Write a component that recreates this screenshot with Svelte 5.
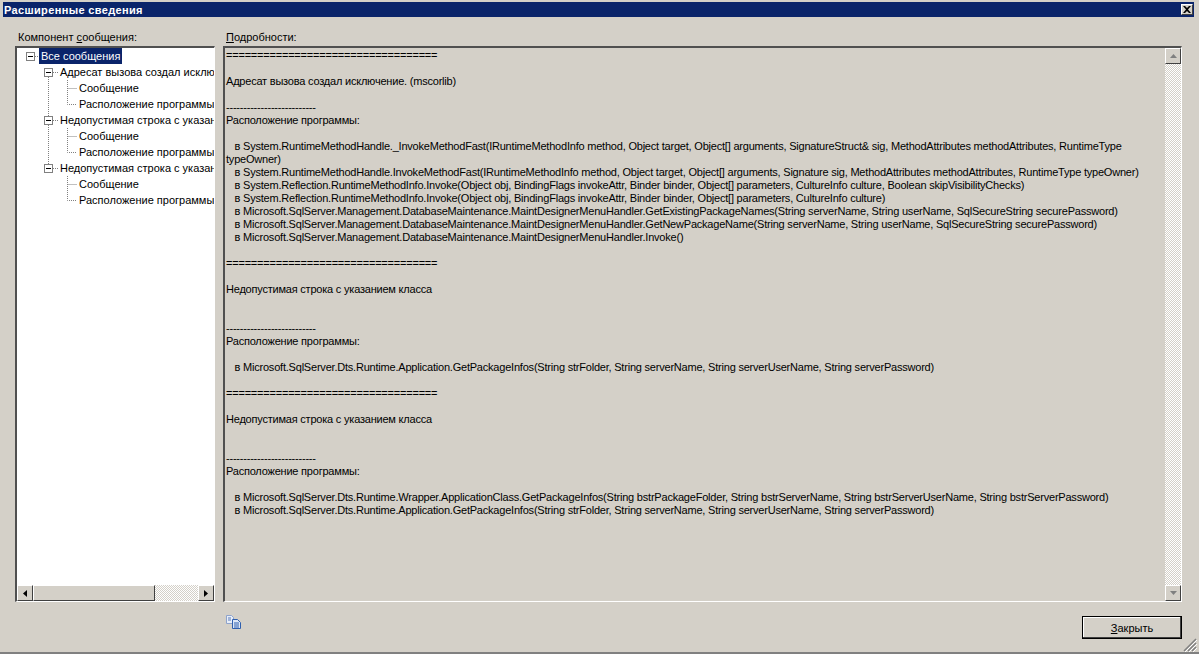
<script>
    const treeRows = [
        { level: 0, text: "Все сообщения", selected: true, box: true },
        { level: 1, text: "Адресат вызова создал исключение. (mscorlib)", box: true },
        { level: 2, text: "Сообщение" },
        { level: 2, text: "Расположение программы" },
        { level: 1, text: "Недопустимая строка с указанием класса", box: true },
        { level: 2, text: "Сообщение" },
        { level: 2, text: "Расположение программы" },
        { level: 1, text: "Недопустимая строка с указанием класса", box: true },
        { level: 2, text: "Сообщение" },
        { level: 2, text: "Расположение программы" },
    ];

    const eq = "==================================";
    const dash = "--------------------------";

    const details = [
        eq,
        "",
        "Адресат вызова создал исключение. (mscorlib)",
        "",
        dash,
        "Расположение программы:",
        "",
        "   в System.RuntimeMethodHandle._InvokeMethodFast(IRuntimeMethodInfo method, Object target, Object[] arguments, SignatureStruct& sig, MethodAttributes methodAttributes, RuntimeType",
        "typeOwner)",
        "   в System.RuntimeMethodHandle.InvokeMethodFast(IRuntimeMethodInfo method, Object target, Object[] arguments, Signature sig, MethodAttributes methodAttributes, RuntimeType typeOwner)",
        "   в System.Reflection.RuntimeMethodInfo.Invoke(Object obj, BindingFlags invokeAttr, Binder binder, Object[] parameters, CultureInfo culture, Boolean skipVisibilityChecks)",
        "   в System.Reflection.RuntimeMethodInfo.Invoke(Object obj, BindingFlags invokeAttr, Binder binder, Object[] parameters, CultureInfo culture)",
        "   в Microsoft.SqlServer.Management.DatabaseMaintenance.MaintDesignerMenuHandler.GetExistingPackageNames(String serverName, String userName, SqlSecureString securePassword)",
        "   в Microsoft.SqlServer.Management.DatabaseMaintenance.MaintDesignerMenuHandler.GetNewPackageName(String serverName, String userName, SqlSecureString securePassword)",
        "   в Microsoft.SqlServer.Management.DatabaseMaintenance.MaintDesignerMenuHandler.Invoke()",
        "",
        eq,
        "",
        "Недопустимая строка с указанием класса",
        "",
        "",
        dash,
        "Расположение программы:",
        "",
        "   в Microsoft.SqlServer.Dts.Runtime.Application.GetPackageInfos(String strFolder, String serverName, String serverUserName, String serverPassword)",
        "",
        eq,
        "",
        "Недопустимая строка с указанием класса",
        "",
        "",
        dash,
        "Расположение программы:",
        "",
        "   в Microsoft.SqlServer.Dts.Runtime.Wrapper.ApplicationClass.GetPackageInfos(String bstrPackageFolder, String bstrServerName, String bstrServerUserName, String bstrServerPassword)",
        "   в Microsoft.SqlServer.Dts.Runtime.Application.GetPackageInfos(String strFolder, String serverName, String serverUserName, String serverPassword)",
    ].join("\n");
</script>

<div class="window">
    <div class="titlebar">
        <span class="title">Расширенные сведения</span>
        <button class="close" aria-label="Закрыть окно">
            <svg width="8" height="7" viewBox="0 0 8 7">
                <path d="M0 0h2l2 2 2-2h2L5 3.500 8 7H6L4 5 2 7H0l3-3.500z" fill="#000" />
            </svg>
        </button>
    </div>

    <div class="panes">
        <div class="left">
            <div class="label">Компонент <u>с</u>ообщения:</div>
            <div class="sunken tree-box">
                <div class="tree">
                    <svg class="tree-lines" width="196" height="160">
                        <g stroke="#808080" stroke-dasharray="1 1" fill="none">
                            <path d="M31.500 29V125" />
                            <path d="M50.500 32V56.500H60M50.500 40.500H60" />
                            <path d="M50.500 80V104.500H60M50.500 88.500H60" />
                            <path d="M50.500 128V152.500H60M50.500 136.500H60" />
                        </g>
                    </svg>
                    {#each treeRows as row}
                        <div class="row level{row.level}">
                            {#if row.box}
                                <span class="box"><i></i></span>
                                <span class="dots"></span>
                            {/if}
                            <span class="node" class:selected={row.selected}>{row.text}</span>
                        </div>
                    {/each}
                </div>
                <div class="hscroll">
                    <div class="sb-btn">
                        <svg width="4" height="7" viewBox="0 0 4 7"><path d="M4 0v7L0 3.500z" fill="#000" /></svg>
                    </div>
                    <div class="thumb"></div>
                    <div class="track"></div>
                    <div class="sb-btn">
                        <svg width="4" height="7" viewBox="0 0 4 7"><path d="M0 0v7l4-3.500z" fill="#000" /></svg>
                    </div>
                </div>
            </div>
        </div>

        <div class="right">
            <div class="label"><u>П</u>одробности:</div>
            <div class="sunken detail-box">
                <div class="details">{details}</div>
                <div class="vscroll">
                    <div class="sb-btn">
                        <svg width="7" height="4" viewBox="0 0 7 4"><path d="M0 4h7L3.500 0z" fill="#808080" /></svg>
                    </div>
                    <div class="track"></div>
                    <div class="sb-btn">
                        <svg width="7" height="4" viewBox="0 0 7 4"><path d="M0 0h7L3.500 4z" fill="#808080" /></svg>
                    </div>
                </div>
            </div>
        </div>
    </div>

    <div class="footer">
        <svg class="copy" width="16" height="14" viewBox="0 0 16 14">
            <path d="M.5.500h5l2 2v6h-7z" fill="#e8eef8" stroke="#8ea3cc" />
            <path d="M2 3h3M2 5h3" stroke="#5a7ab8" />
            <path d="M6.500 4.500h5l3 3v6h-8z" fill="#dbe6f8" stroke="#2f5fae" />
            <path d="M8 8h5M8 10h5M8 12h5" stroke="#2f5fae" />
        </svg>
        <button class="close-btn"><u>З</u>акрыть</button>
        <svg class="grip" width="14" height="14" viewBox="0 0 14 14">
            <path d="M13 1 1 13M13 5 5 13M13 9 9 13" stroke="#808080" stroke-width="1.500" fill="none" />
            <path d="M14 2 2 14M14 6 6 14M14 10 10 14" stroke="#fff" fill="none" />
        </svg>
    </div>
</div>

<style>
    :global(body) {
        margin: 0;
        background: #d4d0c8;
    }

    .window {
        width: 1199px;
        height: 654px;
        box-sizing: border-box;
        padding: 2px 5px 0 3px;
        background: #d4d0c8;
        border-bottom: 2px solid #808080;
        overflow: hidden;
        display: flex;
        flex-direction: column;
        font-family: "Liberation Sans", Arial, sans-serif;
        font-size: 11px;
        color: #000;
    }

    .titlebar {
        height: 15px;
        flex: none;
        background: #0a246a;
        display: flex;
        align-items: center;
        justify-content: space-between;
        padding: 0 1px 0 1px;
    }

    .title {
        color: #fff;
        font-weight: bold;
        font-size: 11px;
        letter-spacing: 0.35px;
    }

    .close {
        width: 12px;
        height: 11px;
        padding: 0;
        background: #d4d0c8;
        border: 1px solid;
        border-color: #fff #404040 #404040 #fff;
        display: flex;
        align-items: center;
        justify-content: center;
    }

    .panes {
        display: flex;
        gap: 8px;
        padding: 14px 0 0 12px;
        height: 585px;
        box-sizing: border-box;
        flex: none;
    }

    .label {
        height: 15px;
        line-height: 13px;
        padding-left: 3px;
        flex: none;
    }

    .left {
        width: 200px;
        display: flex;
        flex-direction: column;
    }

    .right {
        width: 959px;
        display: flex;
        flex-direction: column;
    }

    .sunken {
        flex: 1;
        min-height: 0;
        box-sizing: border-box;
        border-style: solid;
        border-width: 2px 1px 1px 2px;
        border-color: #505050 #fff #fff #505050;
        display: flex;
    }

    .tree-box {
        flex-direction: column;
        background: #fff;
    }

    .tree {
        flex: 1;
        position: relative;
        overflow: hidden;
    }

    .tree-lines {
        position: absolute;
        left: 0;
        top: 0;
    }

    .row {
        height: 16px;
        display: flex;
        align-items: center;
        white-space: nowrap;
        position: relative;
    }

    .level0 {
        padding-left: 9px;
    }

    .level1 {
        padding-left: 27px;
    }

    .level2 {
        padding-left: 60px;
    }

    .box {
        width: 9px;
        height: 9px;
        flex: none;
        box-sizing: border-box;
        border: 1px solid #808080;
        background: #fff;
        display: flex;
        align-items: center;
        justify-content: center;
    }

    .box i {
        width: 5px;
        height: 1px;
        background: #000;
    }

    .dots {
        width: 5px;
        height: 1px;
        flex: none;
        background: repeating-linear-gradient(90deg, #808080 0 1px, transparent 1px 2px);
    }

    .level0 .dots {
        width: 4px;
    }

    .node {
        padding: 0 2px;
        line-height: 16px;
        min-width: 0;
        overflow: hidden;
    }

    .selected {
        background: #0a246a;
        color: #fff;
    }

    .hscroll {
        height: 16px;
        flex: none;
        display: flex;
    }

    .vscroll {
        width: 16px;
        flex: none;
        display: flex;
        flex-direction: column;
    }

    .sb-btn {
        width: 16px;
        height: 16px;
        flex: none;
        box-sizing: border-box;
        background: #d4d0c8;
        border: 1px solid;
        border-color: #fff #404040 #404040 #fff;
        display: flex;
        align-items: center;
        justify-content: center;
    }

    .thumb {
        width: 122px;
        flex: none;
        box-sizing: border-box;
        background: #d4d0c8;
        border: 1px solid;
        border-color: #fff #404040 #404040 #fff;
    }

    .track {
        flex: 1;
        background: repeating-conic-gradient(#fff 0 25%, #d4d0c8 0 50%) 0 0 / 2px 2px;
    }

    .detail-box {
        background: #d4d0c8;
    }

    .details {
        flex: 1;
        padding: 1px 0 0 1px;
        white-space: pre;
        line-height: 13px;
        letter-spacing: -0.21px;
        overflow: hidden;
    }

    .footer {
        flex: 1;
        position: relative;
        display: flex;
        justify-content: space-between;
        align-items: flex-start;
        padding: 13px 12px 0 223px;
    }

    .copy {
        flex: none;
    }

    .close-btn {
        width: 100px;
        height: 23px;
        margin-top: 1px;
        padding: 0;
        box-sizing: border-box;
        background: #d4d0c8;
        font: inherit;
        color: #000;
        border: 1px solid #000;
        box-shadow: inset -1px -1px 0 #404040, inset 1px 1px 0 #fff;
    }

    .grip {
        position: absolute;
        right: -3px;
        bottom: 0;
    }
</style>
